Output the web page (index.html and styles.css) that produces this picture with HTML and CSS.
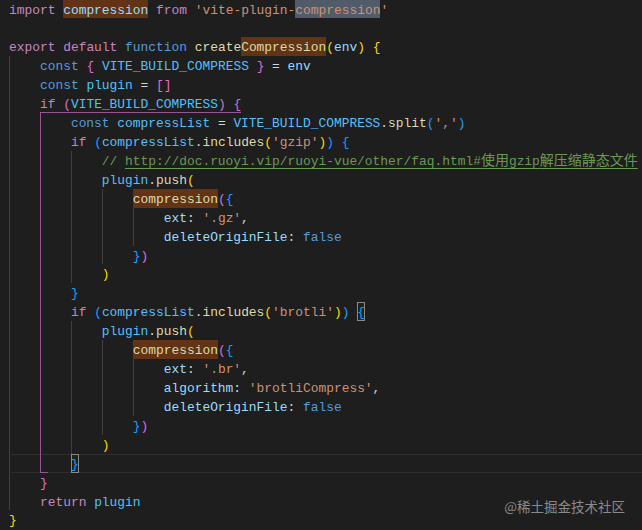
FILE: index.html
```html
<!DOCTYPE html>
<html lang="en">
<head>
    <meta charset="UTF-8">
    <title>vite compression</title>
    <link rel="stylesheet" href="styles.css">
</head>
<body>

<div class="editor">
<div class="code">
<div class="ln"><span class="k">import</span> <span class="v hl">compression</span> <span class="k">from</span> <span class="t">'vite-plugin-<span class="hl2">compression</span>'</span></div>
<div class="ln"> </div>
<div class="ln"><span class="k">export</span> <span class="k">default</span> <span class="s">function</span> <span class="f">create<span class="hl">Compression</span></span><span class="b1">(</span><span class="v">env</span><span class="b1">)</span> <span class="b1">{</span></div>
<div class="ln d1">    <span class="s">const</span> <span class="b2">{</span> <span class="c">VITE_BUILD_COMPRESS</span> <span class="b2">}</span> = <span class="v">env</span></div>
<div class="ln d1">    <span class="s">const</span> <span class="c">plugin</span> = <span class="b2">[]</span></div>
<div class="ln pair-top">    <span class="k">if</span> <span class="b2">(</span><span class="c">VITE_BUILD_COMPRESS</span><span class="b2">)</span> <span class="b2">{</span></div>
<div class="ln d2">        <span class="s">const</span> <span class="c">compressList</span> = <span class="c">VITE_BUILD_COMPRESS</span>.<span class="f">split</span><span class="b3">(</span><span class="t">','</span><span class="b3">)</span></div>
<div class="ln d2">        <span class="k">if</span> <span class="b3">(</span><span class="c">compressList</span>.<span class="f">includes</span><span class="b1">(</span><span class="t">'gzip'</span><span class="b1">)</span><span class="b3">)</span> <span class="b3">{</span></div>
<div class="ln d3">            <span class="m">// <span class="link">http://doc.ruoyi.vip/ruoyi-vue/other/faq.html#<span class="cjk">使用</span>gzip<span class="cjk">解压缩静态文件</span></span></span></div>
<div class="ln d3">            <span class="c">plugin</span>.<span class="f">push</span><span class="b1">(</span></div>
<div class="ln d4">                <span class="f hl">compression</span><span class="b2">(</span><span class="b3">{</span></div>
<div class="ln d5">                    <span class="v">ext</span>: <span class="t">'.gz'</span>,</div>
<div class="ln d5">                    <span class="v">deleteOriginFile</span>: <span class="s">false</span></div>
<div class="ln d4">                <span class="b3">}</span><span class="b2">)</span></div>
<div class="ln d3">            <span class="b1">)</span></div>
<div class="ln d2">        <span class="b3">}</span></div>
<div class="ln d2">        <span class="k">if</span> <span class="b3">(</span><span class="c">compressList</span>.<span class="f">includes</span><span class="b1">(</span><span class="t">'brotli'</span><span class="b1">)</span><span class="b3">)</span> <span class="b3 bm">{</span></div>
<div class="ln d3">            <span class="c">plugin</span>.<span class="f">push</span><span class="b1">(</span></div>
<div class="ln d4">                <span class="f hl">compression</span><span class="b2">(</span><span class="b3">{</span></div>
<div class="ln d5">                    <span class="v">ext</span>: <span class="t">'.br'</span>,</div>
<div class="ln d5">                    <span class="v">algorithm</span>: <span class="t">'brotliCompress'</span>,</div>
<div class="ln d5">                    <span class="v">deleteOriginFile</span>: <span class="s">false</span></div>
<div class="ln d4">                <span class="b3">}</span><span class="b2">)</span></div>
<div class="ln d3">            <span class="b1">)</span></div>
<div class="ln cur">        <span class="b3 bm">}</span></div>
<div class="ln d1">    <span class="b2">}</span></div>
<div class="ln d1">    <span class="k">return</span> <span class="c">plugin</span></div>
<div class="ln"><span class="b1">}</span></div>
</div>
<div class="mark">@稀土掘金技术社区</div>
</div>

</body>
</html>
```

FILE: styles.css
```css
body {
    margin: 0;
    background-color: #1e1e1e;
    overflow: hidden;
}
.editor {
    position: relative;
    width: 642px;
    height: 530px;
    overflow: hidden;
    --g: #404040;
    --p: #93598f;
    --lb: #2e2e2e;
}
.code {
    margin-top: -0.46px;
    font-family: "Liberation Mono", monospace;
    font-size: 12.9px;
    color: #d4d4d4;
}
.ln {
    height: 18.93px;
    line-height: 21.6px;
    padding-left: 9px;
    white-space: pre;
}

/* indent guides */
.d1 {
    background: linear-gradient(var(--g), var(--g)) 9px 0 / 1px 100% no-repeat;
}
.d2 {
    background:
        linear-gradient(var(--g), var(--g)) 9px 0 / 1px 100% no-repeat,
        linear-gradient(var(--p), var(--p)) 40px 0 / 1px 100% no-repeat;
}
.d3 {
    background:
        linear-gradient(var(--g), var(--g)) 9px 0 / 1px 100% no-repeat,
        linear-gradient(var(--p), var(--p)) 40px 0 / 1px 100% no-repeat,
        linear-gradient(var(--g), var(--g)) 71px 0 / 1px 100% no-repeat;
}
.d4 {
    background:
        linear-gradient(var(--g), var(--g)) 9px 0 / 1px 100% no-repeat,
        linear-gradient(var(--p), var(--p)) 40px 0 / 1px 100% no-repeat,
        linear-gradient(var(--g), var(--g)) 71px 0 / 1px 100% no-repeat,
        linear-gradient(var(--g), var(--g)) 102px 0 / 1px 100% no-repeat;
}
.d5 {
    background:
        linear-gradient(var(--g), var(--g)) 9px 0 / 1px 100% no-repeat,
        linear-gradient(var(--p), var(--p)) 40px 0 / 1px 100% no-repeat,
        linear-gradient(var(--g), var(--g)) 71px 0 / 1px 100% no-repeat,
        linear-gradient(var(--g), var(--g)) 102px 0 / 1px 100% no-repeat,
        linear-gradient(var(--g), var(--g)) 133px 0 / 1px 100% no-repeat;
}
.pair-top {
    background:
        linear-gradient(var(--p), var(--p)) 40px 100% / 201px 1px no-repeat,
        linear-gradient(var(--g), var(--g)) 9px 0 / 1px 100% no-repeat;
}
.cur {
    background:
        linear-gradient(var(--p), var(--p)) 40px 0 / 1px 100% no-repeat,
        linear-gradient(var(--p), var(--p)) 40px 100% / 8px 1px no-repeat,
        linear-gradient(var(--g), var(--g)) 9px 0 / 1px 100% no-repeat,
        linear-gradient(var(--lb), var(--lb)) 11px 0 / 100% 1px no-repeat,
        linear-gradient(var(--lb), var(--lb)) 11px 100% / 100% 1px no-repeat;
}

/* tokens */
.k { color: #c586c0; }
.s { color: #569cd6; }
.f { color: #dcdcaa; }
.v { color: #9cdcfe; }
.c { color: #4fc1ff; }
.t { color: #ce9178; }
.m { color: #6a9955; }
.b1 { color: #ffd700; }
.b2 { color: #da70d6; }
.b3 { color: #179fff; }

.link {
    text-decoration: underline;
    text-underline-offset: 3px;
}
.cjk {
    font-family: "Noto Sans CJK SC", sans-serif;
    font-size: 14px;
    line-height: 1;
}

/* highlights */
.hl, .hl2, .bm {
    display: inline-block;
    height: 18.93px;
    vertical-align: top;
}
.hl {
    background-color: #623314;
}
.hl2 {
    background-color: #515c6a;
}
.bm {
    box-shadow: inset 0 0 0 1px #888888;
    background-color: rgba(0, 100, 0, 0.1);
}

.mark {
    position: absolute;
    right: 17px;
    bottom: 17px;
    font-family: "Noto Sans CJK SC", sans-serif;
    font-size: 13.5px;
    line-height: 14px;
    color: #8a8a8a;
}
```
